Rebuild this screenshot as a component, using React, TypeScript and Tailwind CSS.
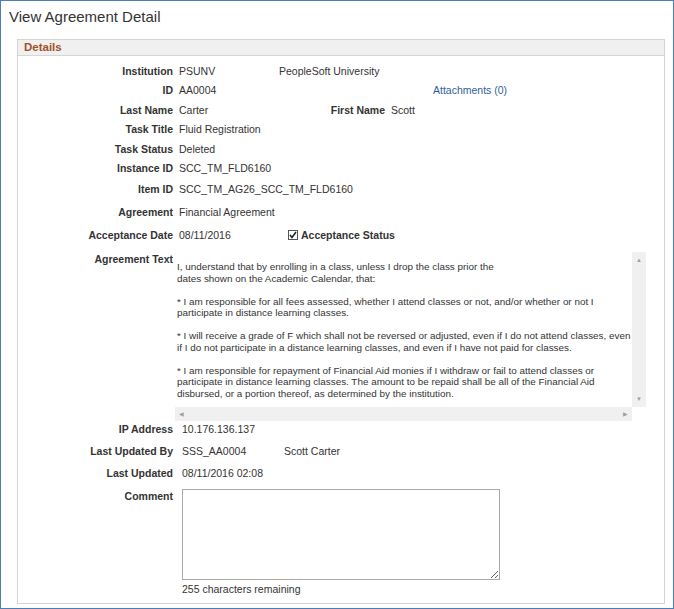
export default function App() {
  const row = "flex items-center h-[19.5px]";
  const lab = "w-[161px] text-right font-bold text-[#333] pr-[6px] shrink-0";
  const val = "text-[#333]";
  return (
    <div className="w-[674px] h-[609px] bg-white border border-[#4a7ebb] relative text-[10.5px] leading-[12px]" style={{ fontFamily: '"Liberation Sans", Arial, sans-serif' }}>
      <div className="pl-[8px] pt-[6px] text-[15px] leading-[20px] text-[#333]">View Agreement Detail</div>
      <div className="absolute left-[16px] top-[38px] w-[648px] h-[565px] border border-[#d5d5d5]">
        <div className="h-[16px] bg-[#f0f0f0] border-b border-[#d5d5d5] pl-[6px] font-bold text-[11.5px] leading-[15px] text-[#a2502a]">Details</div>
        <div className="pt-[5px]">
          <div className={row}><span className={lab}>Institution</span><span className={`${val} w-[100px]`}>PSUNV</span><span className={val}>PeopleSoft University</span></div>
          <div className={row}><span className={lab}>ID</span><span className={`${val} w-[254px]`}>AA0004</span><span className="text-[#2f5f9a]">Attachments (0)</span></div>
          <div className={row}><span className={lab}>Last Name</span><span className={`${val} w-[100px]`}>Carter</span><span className="w-[112px] text-right font-bold text-[#333] pr-[6px]">First Name</span><span className={val}>Scott</span></div>
          <div className={row}><span className={lab}>Task Title</span><span className={val}>Fluid Registration</span></div>
          <div className={row}><span className={lab}>Task Status</span><span className={val}>Deleted</span></div>
          <div className={row}><span className={lab}>Instance ID</span><span className={val}>SCC_TM_FLD6160</span></div>
          <div className="flex items-center h-[22px]"><span className={lab}>Item ID</span><span className={val}>SCC_TM_AG26_SCC_TM_FLD6160</span></div>
          <div className="flex items-center h-[23px]"><span className={lab}>Agreement</span><span className={val}>Financial Agreement</span></div>
          <div className="flex items-center h-[23px]"><span className={lab}>Acceptance Date</span><span className={`${val} w-[109px]`}>08/11/2016</span>
            <span className="w-[10px] h-[10px] border border-[#555] bg-white mr-[3px] flex items-center justify-center">
              <svg width="8" height="8" viewBox="0 0 8 8"><path d="M1 4l2 2.5L7 1" stroke="#222" strokeWidth="1.6" fill="none" /></svg>
            </span>
            <span className="font-bold text-[#333]">Acceptance Status</span></div>
          <div className="flex mt-[6px]">
            <span className={`${lab} pt-[1px]`}>Agreement Text</span>
            <div className="ml-[-4px] w-[471px] h-[169px] flex flex-col">
              <div className="flex flex-1">
                <div className="flex-1 bg-white pl-[2px] pt-[9px] text-[#333] leading-[11.5px] text-[9.9px]">
                  <p>I, understand that by enrolling in a class, unless I drop the class prior the<br />dates shown on the Academic Calendar, that:</p>
                  <p className="mt-[11.5px]">* I am responsible for all fees assessed, whether I attend classes or not, and/or whether or not I participate in distance learning classes.</p>
                  <p className="mt-[11.5px]">* I will receive a grade of F which shall not be reversed or adjusted, even if I do not attend classes, even if I do not participate in a distance learning classes, and even if I have not paid for classes.</p>
                  <p className="mt-[11.5px]">* I am responsible for repayment of Financial Aid monies if I withdraw or fail to attend classes or participate in distance learning classes. The amount to be repaid shall be all of the Financial Aid disbursed, or a portion thereof, as determined by the institution.</p>
                </div>
                <div className="w-[14px] bg-[#f0f0f0] flex flex-col justify-between items-center py-[5px] text-[#a0a0a0] text-[6px] leading-[6px]"><span>▲</span><span>▼</span></div>
              </div>
              <div className="h-[14px] bg-[#f0f0f0] flex justify-between items-center px-[4px] text-[#a0a0a0] text-[6px] mr-[14px]"><span>◀</span><span>▶</span></div>
            </div>
          </div>
          <div className="flex items-center h-[14px] mt-[1px]"><span className={lab}>IP Address</span><span className={`${val} ml-[3px]`}>10.176.136.137</span></div>
          <div className="flex items-center h-[22px] mt-[4px]"><span className={lab}>Last Updated By</span><span className={`${val} w-[102px] ml-[3px]`}>SSS_AA0004</span><span className={val}>Scott Carter</span></div>
          <div className="flex items-center h-[22px]"><span className={lab}>Last Updated</span><span className={`${val} ml-[3px]`}>08/11/2016 02:08</span></div>
          <div className="flex mt-[5px]">
            <span className={`${lab} pt-[1px]`}>Comment</span>
            <div className="ml-[3px]">
              <textarea className="block w-[318px] h-[91px] border border-[#a9a9a9] resize-y" />
              <div className="text-[#333] mt-[3px]">255 characters remaining</div>
            </div>
          </div>
        </div>
      </div>
    </div>
  );
}
